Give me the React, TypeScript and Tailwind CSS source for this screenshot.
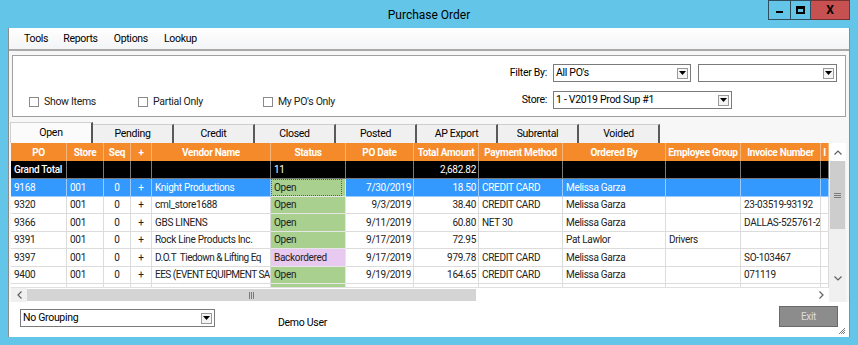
import React from "react";

type Col = { w: string; h: string; align: "l" | "c" | "r" };

const cols: Col[] = [
  { w: "w-[56px]", h: "PO", align: "l" },
  { w: "w-[37px]", h: "Store", align: "l" },
  { w: "w-[27px]", h: "Seq", align: "c" },
  { w: "w-[21px]", h: "+", align: "c" },
  { w: "w-[119px]", h: "Vendor Name", align: "l" },
  { w: "w-[75px]", h: "Status", align: "l" },
  { w: "w-[68px]", h: "PO Date", align: "r" },
  { w: "w-[65px]", h: "Total Amount", align: "r" },
  { w: "w-[84px]", h: "Payment Method", align: "l" },
  { w: "w-[103px]", h: "Ordered By", align: "l" },
  { w: "w-[75px]", h: "Employee Group", align: "l" },
  { w: "w-[80px]", h: "Invoice Number", align: "l" },
  { w: "w-[8px]", h: "I", align: "l" },
];

const rows: string[][] = [
  ["9168", "001", "0", "+", "Knight Productions", "Open", "7/30/2019", "18.50", "CREDIT CARD", "Melissa Garza", "", "", ""],
  ["9320", "001", "0", "+", "cml_store1688", "Open", "9/3/2019", "38.40", "CREDIT CARD", "Melissa Garza", "", "23-03519-93192", ""],
  ["9366", "001", "0", "+", "GBS LINENS", "Open", "9/11/2019", "60.80", "NET 30", "Melissa Garza", "", "DALLAS-525761-2", ""],
  ["9391", "001", "0", "+", "Rock Line Products Inc.", "Open", "9/17/2019", "72.95", "", "Pat Lawlor", "Drivers", "", ""],
  ["9397", "001", "0", "+", "D.O.T  Tiedown & Lifting Eq", "Backordered", "9/17/2019", "979.78", "CREDIT CARD", "Melissa Garza", "", "SO-103467", ""],
  ["9400", "001", "0", "+", "EES (EVENT EQUIPMENT SA", "Open", "9/19/2019", "164.65", "CREDIT CARD", "Melissa Garza", "", "071119", ""],
];

const alignCls = (a: "l" | "c" | "r") =>
  a === "l" ? "justify-start pl-[3px]" : a === "c" ? "justify-center" : "justify-end pr-[2px]";

function SelectBox({ w, text }: { w: string; text: string }) {
  return (
    <div className={`${w} h-[18px] bg-white border border-[#7a7a7a] flex items-center justify-between pl-[2px] pr-[2px]`}>
      <span className="text-[10.5px] text-black leading-none whitespace-nowrap">{text}</span>
      <div className="w-[11px] h-[11px] border border-[#9a9a9a] bg-[#f4f4f4] flex items-center justify-center">
        <svg width="7" height="4" viewBox="0 0 7 4">
          <path d="M0 0 L7 0 L3.5 4 Z" fill="#000" />
        </svg>
      </div>
    </div>
  );
}

function Check({ label, w }: { label: string; w: string }) {
  return (
    <div className={`${w} flex items-center`}>
      <div className="w-[10px] h-[10px] border border-[#8a8a8a] bg-white" />
      <span className="ml-[5px] text-[10.5px] text-[#222]">{label}</span>
    </div>
  );
}

export default function App() {
  const tabs = ["Pending", "Credit", "Closed", "Posted", "AP Export", "Subrental", "Voided"];
  return (
    <div className="w-[858px] h-[345px] bg-[#63c6e9] flex flex-col font-[Roboto,'Noto_Sans',sans-serif] tracking-[-0.3px] overflow-hidden">
      {/* Title bar */}
      <div className="h-[28px] shrink-0 relative flex items-center justify-center">
        <span className="text-[12px] text-black tracking-normal pt-[2px]">Purchase Order</span>
        <div className="absolute top-0 right-[8px] flex h-[20px]">
          <div className="w-[22px] h-[20px] border border-[#2f4f5f] border-r-0 flex items-end justify-center pb-[6px]">
            <div className="w-[7px] h-[2px] bg-black" />
          </div>
          <div className="w-[21px] h-[20px] border border-[#2f4f5f] flex items-center justify-center">
            <div className="w-[9px] h-[8px] border-2 border-black border-t-[3px]" />
          </div>
          <div className="w-[39px] h-[20px] bg-[#c75050] border border-[#7a3030] border-l-0 flex items-center justify-center">
            <span className="text-[12px] font-bold text-black leading-none">X</span>
          </div>
        </div>
      </div>

      {/* Client area */}
      <div className="flex-1 mx-[8px] mb-[8px] bg-[#f7f7f7] border-x border-[#8c8c8c] flex flex-col text-[#222]">
        {/* Menu */}
        <div className="h-[23px] shrink-0 bg-gradient-to-b from-white to-[#f3f4f6] border-b-2 border-[#a9a9a9] flex items-center text-[10.5px] text-black">
          <span className="ml-[15px]">Tools</span>
          <span className="ml-[15px]">Reports</span>
          <span className="ml-[16px]">Options</span>
          <span className="ml-[16px]">Lookup</span>
        </div>

        {/* Filter panel */}
        <div className="mt-[4px] ml-[3px] mr-[3px] h-[62px] shrink-0 bg-white border border-[#a0a0a0] flex justify-between">
          <div className="self-end pb-[6px] pl-[16px] flex">
            <Check label="Show Items" w="w-[109px]" />
            <Check label="Partial Only" w="w-[125px]" />
            <Check label="My PO's Only" w="w-[100px]" />
          </div>
          <div className="pt-[8px] pr-[8px] flex flex-col gap-[9px] text-[10.5px] text-black">
            <div className="flex items-center">
              <span className="w-[40px] text-right mr-[6px]">Filter By:</span>
              <SelectBox w="w-[138px]" text="All PO's" />
              <div className="w-[7px]" />
              <SelectBox w="w-[139px]" text="" />
            </div>
            <div className="flex items-center">
              <span className="w-[40px] text-right mr-[6px]">Store:</span>
              <SelectBox w="w-[179px]" text="1 - V2019 Prod Sup #1" />
            </div>
          </div>
        </div>

        {/* Tabs */}
        <div className="mt-[5px] h-[21px] shrink-0 flex items-end pl-[1px] text-[10.5px] text-black">
          <div className="w-[83px] h-[21px] bg-[#fbfbfb] border-t border-l border-[#d0d0d0] border-r-2 border-r-[#555] flex items-center justify-center">
            Open
          </div>
          {tabs.map((t) => (
            <div
              key={t}
              className="w-[81px] h-[19px] bg-[#f0f0f0] border-t border-[#cfcfcf] border-r-2 border-r-[#5a5a5a] flex items-center justify-center"
            >
              {t}
            </div>
          ))}
        </div>

        {/* Grid */}
        <div className="ml-[2px] w-[835px] h-[159px] shrink-0 flex flex-col bg-white">
          <div className="flex h-[144px]">
            <div className="w-[818px] overflow-hidden flex flex-col text-[10px]">
              {/* Header */}
              <div className="flex h-[18px] shrink-0 bg-[#f58a2b] text-white font-bold">
                {cols.map((c, i) => (
                  <div
                    key={i}
                    className={`${c.w} shrink-0 h-full border-r border-[#f8b57a] flex items-center justify-center overflow-hidden whitespace-nowrap`}
                  >
                    {c.h}
                  </div>
                ))}
              </div>
              {/* Grand Total */}
              <div className="flex h-[18px] shrink-0 bg-black text-white">
                {cols.map((c, i) => (
                  <div
                    key={i}
                    className={`${c.w} shrink-0 h-full border-r border-b border-[#7a7a7a] flex items-center overflow-hidden whitespace-nowrap ${alignCls(c.align)}`}
                  >
                    {i === 0 ? <span className="font-medium">Grand Total</span> : i === 5 ? "11" : i === 7 ? "2,682.82" : ""}
                  </div>
                ))}
              </div>
              {/* Rows */}
              {rows.map((r, ri) => {
                const sel = ri === 0;
                return (
                  <div
                    key={ri}
                    className={`flex h-[17.5px] shrink-0 ${sel ? "bg-[#3399ff] text-white" : "bg-white text-[#222]"}`}
                  >
                    {cols.map((c, i) => {
                      const status = i === 5;
                      const back = r[5] === "Backordered";
                      let cls = sel ? "border-[#9ccbff]" : "border-[#dcdcdc]";
                      if (status) cls = `${back ? "bg-[#e8c9f0]" : "bg-[#a9d08e]"} text-[#222] border-[#e6e6e6]`;
                      const tight = i === 4 && ri >= 4 ? "tracking-[-0.5px]" : "";
                      return (
                        <div
                          key={i}
                          className={`${c.w} shrink-0 h-full border-r border-b flex items-center overflow-hidden whitespace-pre ${cls} ${tight} ${alignCls(c.align)}`}
                        >
                          {status && sel ? (
                            <div className="w-full h-full -ml-[3px] pl-[2px] flex items-center border border-dotted border-[#556b45] bg-[#a9d08e]">
                              {r[i]}
                            </div>
                          ) : (
                            r[i]
                          )}
                        </div>
                      );
                    })}
                  </div>
                );
              })}
              {/* partial row */}
              <div className="flex h-[3px] shrink-0 bg-white">
                {cols.map((c, i) => (
                  <div
                    key={i}
                    className={`${c.w} shrink-0 h-full border-r ${i === 5 ? "bg-[#a9d08e] border-[#e6e6e6]" : "border-[#dcdcdc]"}`}
                  />
                ))}
              </div>
            </div>
            {/* Vertical scrollbar */}
            <div className="w-[17px] h-full bg-[#f0f0f0] flex flex-col">
              <div className="h-[18px] bg-white flex items-center justify-center">
                <svg width="8" height="5" viewBox="0 0 8 5">
                  <path d="M0.5 4.5 L4 1 L7.5 4.5" stroke="#606060" strokeWidth="1.2" fill="none" />
                </svg>
              </div>
              <div className="h-[68px] mx-[1px] bg-[#cdcdcd] flex items-center justify-center">
                <div className="flex flex-col gap-[1px]">
                  <div className="w-[7px] h-[1px] bg-[#7a7a7a]" />
                  <div className="w-[7px] h-[1px] bg-[#7a7a7a]" />
                  <div className="w-[7px] h-[1px] bg-[#7a7a7a]" />
                </div>
              </div>
              <div className="flex-1" />
              <div className="h-[18px] flex items-center justify-center">
                <svg width="8" height="5" viewBox="0 0 8 5">
                  <path d="M0.5 0.5 L4 4 L7.5 0.5" stroke="#606060" strokeWidth="1.2" fill="none" />
                </svg>
              </div>
            </div>
          </div>
          {/* Horizontal scrollbar */}
          <div className="flex h-[15px]">
            <div className="w-[818px] flex bg-white border-t border-[#e0e0e0]">
              <div className="w-[16px] h-full bg-[#f0f0f0] flex items-center justify-center">
                <svg width="5" height="8" viewBox="0 0 5 8">
                  <path d="M4.5 0.5 L1 4 L4.5 7.5" stroke="#606060" strokeWidth="1.2" fill="none" />
                </svg>
              </div>
              <div className="w-[449px] my-[1px] bg-[#d4d4d4] flex items-center justify-center">
                <div className="flex gap-[1px]">
                  <div className="w-[1px] h-[7px] bg-[#7a7a7a]" />
                  <div className="w-[1px] h-[7px] bg-[#7a7a7a]" />
                  <div className="w-[1px] h-[7px] bg-[#7a7a7a]" />
                </div>
              </div>
              <div className="flex-1" />
              <div className="w-[16px] h-full flex items-center justify-center">
                <svg width="5" height="8" viewBox="0 0 5 8">
                  <path d="M0.5 0.5 L4 4 L0.5 7.5" stroke="#606060" strokeWidth="1.2" fill="none" />
                </svg>
              </div>
            </div>
            <div className="w-[17px] bg-[#f0f0f0]" />
          </div>
        </div>

        {/* Bottom bar */}
        <div className="flex-1 relative flex items-start bg-white">
          <div className="ml-[11px] mt-[7px]">
            <SelectBox w="w-[195px]" text="No Grouping" />
          </div>
          <span className="ml-[63px] mt-[13px] text-[10.5px] text-black">Demo User</span>
          <div className="flex-1" />
          <div className="mt-[4px] mr-[11px] w-[59px] h-[21px] bg-[#8c8c8c] border border-[#6a6a6a] flex items-center justify-center text-[10px] text-[#dcdcdc]">
            Exit
          </div>
          <svg className="absolute right-[3px] bottom-[2px]" width="8" height="8" viewBox="0 0 8 8">
            <path d="M7 1 L1 7 M7 3 L3 7 M7 5 L5 7" stroke="#808080" strokeWidth="1" />
          </svg>
        </div>
      </div>
    </div>
  );
}
